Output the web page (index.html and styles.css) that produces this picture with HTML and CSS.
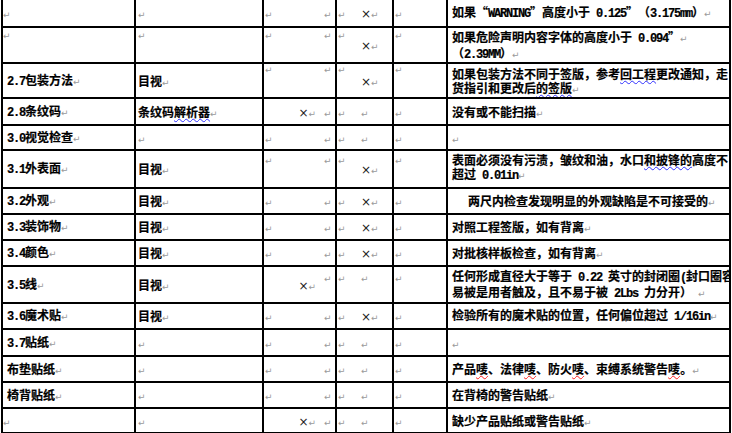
FILE: index.html
```html
<!DOCTYPE html>
<html lang="zh-CN">
<head>
<meta charset="utf-8">
<title>检验标准</title>
<link rel="stylesheet" href="styles.css">
</head>
<body>
<table class="spec">
<colgroup>
<col class="w1"><col class="w2"><col class="w3a"><col class="w3b"><col class="w4a"><col class="w4b"><col class="w5"><col class="w6"><col class="w7">
</colgroup>
<tbody>
<tr class="r1">
<td class="c1"><span class="pm">↵</span></td>
<td class="c2"><span class="pm">↵</span></td>
<td class="c3a"><span class="pm">↵</span></td>
<td class="c3b"><span class="pm">↵</span></td>
<td class="c4a"><span class="pm">↵</span></td>
<td class="c4b"><span class="x">×</span><span class="pm">↵</span></td>
<td class="c5"><span class="pm">↵</span></td>
<td class="c6">如果<span class="fq l">“</span><span class="a">WARNING</span><span class="fq r">”</span>高度小于<span class="a"> 0.125</span><span class="fq r">”</span>（<span class="a">3.175mm</span>）<span class="pm">↵</span></td>
<td class="end"><span class="re"></span></td>
</tr>
<tr class="r2">
<td class="c1 t"><span class="pm">↵</span></td>
<td class="c2 t"><span class="pm">↵</span></td>
<td class="c3a t"><span class="pm">↵</span></td>
<td class="c3b t"><span class="pm">↵</span></td>
<td class="c4a t"><span class="pm">↵</span></td>
<td class="c4b"><span class="x">×</span><span class="pm">↵</span></td>
<td class="c5 t"><span class="pm">↵</span></td>
<td class="c6 tt">如果危险声明内容字体的高度小于<span class="a"> 0.094</span><span class="fq r">”</span><span class="pm">↵</span><br>（<span class="a">2.39MM</span>）<span class="pm">↵</span></td>
<td class="end t"><span class="re"></span></td>
</tr>
<tr class="r3">
<td class="c1"><span class="lab"><span class="a">2.7</span>包装方法</span><span class="pm">↵</span></td>
<td class="c2">目视<span class="pm">↵</span></td>
<td class="c3a t"><span class="pm">↵</span></td>
<td class="c3b t"><span class="pm">↵</span></td>
<td class="c4a t"><span class="pm">↵</span></td>
<td class="c4b"><span class="x">×</span><span class="pm">↵</span></td>
<td class="c5 t"><span class="pm">↵</span></td>
<td class="c6">如果包装方法不同于签版，参考<span class="wb">回工程</span>更改通知，走<br>货指引和更改后<span class="wb">的签版</span><span class="pm">↵</span></td>
<td class="end t"><span class="re"></span></td>
</tr>
<tr class="r4">
<td class="c1"><span class="lab"><span class="a">2.8</span>条纹码</span><span class="pm">↵</span></td>
<td class="c2">条纹码<span class="wb">解析器</span><span class="pm">↵</span></td>
<td class="c3a r"><span class="x">×</span><span class="pm">↵</span></td>
<td class="c3b"><span class="pm">↵</span></td>
<td class="c4a"><span class="pm">↵</span></td>
<td class="c4b"><span class="pm">↵</span></td>
<td class="c5"><span class="pm">↵</span></td>
<td class="c6">没有或不能扫描<span class="pm">↵</span></td>
<td class="end"><span class="re"></span></td>
</tr>
<tr class="r5">
<td class="c1"><span class="lab"><span class="a">3.0</span>视觉检查</span><span class="pm">↵</span></td>
<td class="c2"><span class="pm">↵</span></td>
<td class="c3a"><span class="pm">↵</span></td>
<td class="c3b"><span class="pm">↵</span></td>
<td class="c4a"><span class="pm">↵</span></td>
<td class="c4b"><span class="pm">↵</span></td>
<td class="c5"><span class="pm">↵</span></td>
<td class="c6"><span class="pm">↵</span></td>
<td class="end"><span class="re"></span></td>
</tr>
<tr class="r6">
<td class="c1"><span class="lab"><span class="a">3.1</span>外表面</span><span class="pm">↵</span></td>
<td class="c2">目视<span class="pm">↵</span></td>
<td class="c3a t"><span class="pm">↵</span></td>
<td class="c3b t"><span class="pm">↵</span></td>
<td class="c4a t"><span class="pm">↵</span></td>
<td class="c4b"><span class="x">×</span><span class="pm">↵</span></td>
<td class="c5 t"><span class="pm">↵</span></td>
<td class="c6 tt">表面必须没有污渍，皱纹和油，水口<span class="wb">和披锋的</span>高度不<br>超过<span class="a"> 0.01in</span><span class="pm">↵</span></td>
<td class="end t"><span class="re"></span></td>
</tr>
<tr class="r7">
<td class="c1"><span class="lab"><span class="a">3.2</span>外观</span><span class="pm">↵</span></td>
<td class="c2">目视<span class="pm">↵</span></td>
<td class="c3a"><span class="pm">↵</span></td>
<td class="c3b"><span class="pm">↵</span></td>
<td class="c4a"><span class="pm">↵</span></td>
<td class="c4b"><span class="x">×</span><span class="pm">↵</span></td>
<td class="c5"><span class="pm">↵</span></td>
<td class="c6 ind">两尺内检查发现明显的外观缺陷是不可接受的<span class="pm">↵</span></td>
<td class="end"><span class="re"></span></td>
</tr>
<tr class="r8">
<td class="c1"><span class="lab"><span class="a">3.3</span>装饰物</span><span class="pm">↵</span></td>
<td class="c2">目视<span class="pm">↵</span></td>
<td class="c3a"><span class="pm">↵</span></td>
<td class="c3b"><span class="pm">↵</span></td>
<td class="c4a"><span class="pm">↵</span></td>
<td class="c4b"><span class="x">×</span><span class="pm">↵</span></td>
<td class="c5"><span class="pm">↵</span></td>
<td class="c6">对照工程签版，如有背离<span class="pm">↵</span></td>
<td class="end"><span class="re"></span></td>
</tr>
<tr class="r9">
<td class="c1"><span class="lab"><span class="a">3.4</span>颜色</span><span class="pm">↵</span></td>
<td class="c2">目视<span class="pm">↵</span></td>
<td class="c3a"><span class="pm">↵</span></td>
<td class="c3b"><span class="pm">↵</span></td>
<td class="c4a"><span class="pm">↵</span></td>
<td class="c4b"><span class="x">×</span><span class="pm">↵</span></td>
<td class="c5"><span class="pm">↵</span></td>
<td class="c6">对批核样板检查，如有背离<span class="pm">↵</span></td>
<td class="end"><span class="re"></span></td>
</tr>
<tr class="r10">
<td class="c1"><span class="lab"><span class="a">3.5</span>线</span><span class="pm">↵</span></td>
<td class="c2">目视<span class="pm">↵</span></td>
<td class="c3a r"><span class="x">×</span><span class="pm">↵</span></td>
<td class="c3b t"><span class="pm">↵</span></td>
<td class="c4a t"><span class="pm">↵</span></td>
<td class="c4b t"><span class="pm">↵</span></td>
<td class="c5 t"><span class="pm">↵</span></td>
<td class="c6">任何形成直径大于等于<span class="a"> 0.22 </span>英寸的封闭圈<span class="a">(</span>封口圈容<br>易被是用者触及，且不易于被<span class="a"> 2Lbs </span>力分开）<span class="a"> </span><span class="pm">↵</span></td>
<td class="end t"><span class="re"></span></td>
</tr>
<tr class="r11">
<td class="c1"><span class="lab"><span class="a">3.6</span>魔术贴</span><span class="pm">↵</span></td>
<td class="c2">目视<span class="pm">↵</span></td>
<td class="c3a"><span class="pm">↵</span></td>
<td class="c3b"><span class="pm">↵</span></td>
<td class="c4a"><span class="pm">↵</span></td>
<td class="c4b"><span class="x">×</span><span class="pm">↵</span></td>
<td class="c5"><span class="pm">↵</span></td>
<td class="c6">检验所有的魔术贴的位置，任何偏位超过<span class="a"> 1/16in</span><span class="pm">↵</span></td>
<td class="end"><span class="re"></span></td>
</tr>
<tr class="r12">
<td class="c1"><span class="lab"><span class="a">3.7</span>贴纸</span><span class="pm">↵</span></td>
<td class="c2"><span class="pm">↵</span></td>
<td class="c3a"><span class="pm">↵</span></td>
<td class="c3b"><span class="pm">↵</span></td>
<td class="c4a"><span class="pm">↵</span></td>
<td class="c4b"><span class="pm">↵</span></td>
<td class="c5"><span class="pm">↵</span></td>
<td class="c6"><span class="pm">↵</span></td>
<td class="end"><span class="re"></span></td>
</tr>
<tr class="r13">
<td class="c1"><span class="lab">布垫贴纸</span><span class="pm">↵</span></td>
<td class="c2"><span class="pm">↵</span></td>
<td class="c3a"><span class="pm">↵</span></td>
<td class="c3b"><span class="pm">↵</span></td>
<td class="c4a"><span class="pm">↵</span></td>
<td class="c4b"><span class="pm">↵</span></td>
<td class="c5"><span class="pm">↵</span></td>
<td class="c6">产品<span class="wr">唛</span>、法律<span class="wr">唛</span>、防火<span class="wr">唛</span>、束缚系统警告<span class="wr">唛</span>。<span class="pm">↵</span></td>
<td class="end"><span class="re"></span></td>
</tr>
<tr class="r14">
<td class="c1"><span class="lab">椅背贴纸</span><span class="pm">↵</span></td>
<td class="c2"><span class="pm">↵</span></td>
<td class="c3a"><span class="pm">↵</span></td>
<td class="c3b"><span class="pm">↵</span></td>
<td class="c4a"><span class="pm">↵</span></td>
<td class="c4b"><span class="pm">↵</span></td>
<td class="c5"><span class="pm">↵</span></td>
<td class="c6">在背椅的警告贴纸<span class="pm">↵</span></td>
<td class="end"><span class="re"></span></td>
</tr>
<tr class="r15">
<td class="c1"><span class="pm">↵</span></td>
<td class="c2"><span class="pm">↵</span></td>
<td class="c3a r"><span class="x">×</span><span class="pm">↵</span></td>
<td class="c3b"><span class="pm">↵</span></td>
<td class="c4a"><span class="pm">↵</span></td>
<td class="c4b"><span class="pm">↵</span></td>
<td class="c5"><span class="pm">↵</span></td>
<td class="c6">缺少产品贴纸或警告贴纸<span class="pm">↵</span></td>
<td class="end"><span class="re"></span></td>
</tr>
</tbody>
</table>
</body>
</html>
```
FILE: styles.css
```css
html, body {
  margin: 0;
  padding: 0;
  background: #fff;
}
body {
  overflow: hidden;
}
.spec {
  border-collapse: separate;
  border-spacing: 0;
  table-layout: fixed;
  width: 733px;
  margin: -2px 0 0 1px;
  border-top: 2px solid #000;
  border-left: 2px solid #000;
  font: bold 12px/14px "Noto Sans CJK SC", "Liberation Sans", sans-serif;
  color: #000;
  -webkit-text-stroke: 0.2px #000;
}
.w1 { width: 133px; }
.w2 { width: 128px; }
.w3a { width: 57px; }
.w3b { width: 16px; }
.w4a { width: 13px; }
.w4b { width: 44px; }
.w5 { width: 54px; }
.w6 { width: 283px; }
.w7 { width: 3px; }

.r1 { height: 28px; }
.r2 { height: 34px; }
.r3 { height: 35px; }
.r4 { height: 27px; }
.r5 { height: 25px; }
.r6 { height: 38px; }
.r7, .r8, .r9, .r11, .r13, .r14 { height: 26px; }
.r10 { height: 37px; }
.r12 { height: 27px; }
.r15 { height: 25px; }

.spec td {
  box-sizing: border-box;
  padding: 0;
  border-right: 2px solid #000;
  border-bottom: 2px solid #000;
  vertical-align: middle;
  white-space: nowrap;
  overflow: hidden;
}
.spec td.c3a,
.spec td.c4a,
.spec td.end {
  border-right: 0;
}
.spec td.end {
  border-bottom: 0;
  padding-left: 1px;
}
.c1 { padding-left: 0; }
.spec td.c2 { padding-left: 2px; }
.spec td.c3a { padding-left: 1px; }
.spec td.c3a.r { text-align: right; padding-right: 5px; }
.spec td.c3b { padding-left: 3px; }
.spec td.c4a { padding-left: 1px; }
.spec td.c4b { padding-left: 11px; }
.spec td.c5 { padding-left: 1px; }
.spec td.c6 { padding-left: 4px; }
.spec td.c6.ind { padding-left: 20px; }

.spec td.t {
  vertical-align: top;
  line-height: 12px;
}
.spec td.tt {
  vertical-align: top;
  padding-top: 2px;
}
.r3 td.t { line-height: 7px; }
.r6 td.t { padding-top: 2px; }
.r10 td.t { padding-top: 4px; }

.lab { margin-left: 4px; }

.a {
  font-family: "Liberation Mono", monospace;
  font-size: 12px;
  letter-spacing: -1.2px;
}
.fq {
  display: inline-block;
  width: 12px;
}
.fq.l { text-align: right; }
.fq.r { text-align: left; }

.pm {
  font: normal 9px/1 "DejaVu Sans", sans-serif;
  color: #9a9a9a;
  -webkit-text-stroke: 0;
}
.x {
  font: normal 12px/1 "DejaVu Sans", sans-serif;
  color: #222;
  -webkit-text-stroke: 0;
}
.re {
  display: inline-block;
  width: 1px;
  height: 2px;
  background: #999;
  vertical-align: middle;
}
.wb {
  text-decoration: underline wavy #3030ff;
  text-decoration-thickness: 1px;
  text-underline-offset: 1px;
}
.wr {
  text-decoration: underline wavy #ff2020;
  text-decoration-thickness: 1px;
  text-underline-offset: 1px;
}
```
